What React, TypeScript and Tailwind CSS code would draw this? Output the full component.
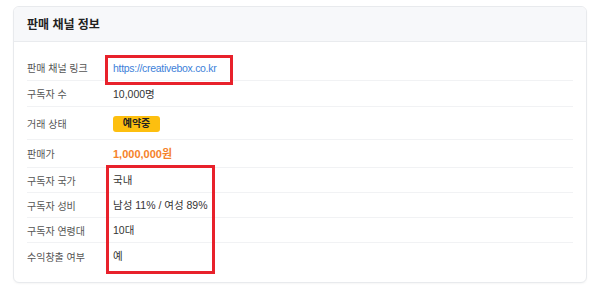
const rows: { label: string; value: React.ReactNode; h: string; last?: boolean }[] = [
  {
    label: '판매 채널 링크',
    value: <a className="tracking-[-0.3px] text-[#3d7fd9]">https://creativebox.co.kr</a>,
    h: 'h-[26px]',
  },
  { label: '구독자 수', value: '10,000명', h: 'h-[26px]' },
  {
    label: '거래 상태',
    value: (
      <span className="inline-flex h-[16px] w-[47px] items-center justify-center rounded-[3px] bg-[#fdbf0f] text-[10px] font-bold text-[#222]">
        예약중
      </span>
    ),
    h: 'h-[33px]',
  },
  {
    label: '판매가',
    value: <span className="text-[11px] font-bold text-[#f5822a]">1,000,000원</span>,
    h: 'h-[28px]',
  },
  { label: '구독자 국가', value: '국내', h: 'h-[25px]' },
  { label: '구독자 성비', value: '남성 11% / 여성 89%', h: 'h-[25px]' },
  { label: '구독자 연령대', value: '10대', h: 'h-[25px]' },
  { label: '수익창출 여부', value: '예', h: 'h-[26px]', last: true },
];

export default function App() {
  return (
    <div
      className="h-[290px] w-[600px] bg-white pt-[6px] pl-[13px]"
      style={{ fontFamily: '"Liberation Sans", "Noto Sans CJK KR", sans-serif' }}
    >
      <div className="relative w-[574px] overflow-hidden rounded-[6px] border border-[#e8eaed] bg-white shadow-[0_1px_2px_rgba(0,0,0,0.04)]">
        <div className="flex h-[35px] items-center border-b border-[#e9ebee] bg-[#f7f8fa] px-[13px] pt-[1px]">
          <h2 className="text-[12px] font-bold text-[#222]">판매 채널 정보</h2>
        </div>

        <div className="px-[13px] pt-[13px] pb-[13px]">
          {rows.map((r) => (
            <div
              key={r.label}
              className={`flex items-center pt-[2px] ${r.h} ${r.last ? '' : 'border-b border-[#f1f2f4]'}`}
            >
              <div className="w-[86px] shrink-0 text-[10px] text-[#555]">{r.label}</div>
              <div className="text-[10.5px] text-[#333]">{r.value}</div>
            </div>
          ))}
        </div>

        {/* annotation boxes */}
        <div className="pointer-events-none absolute top-[48px] left-[91px] h-[30px] w-[128px] border-[3px] border-[#e8212b]" />
        <div className="pointer-events-none absolute top-[158px] left-[92px] h-[109px] w-[109px] border-[3px] border-[#e8212b]" />
      </div>
    </div>
  );
}
